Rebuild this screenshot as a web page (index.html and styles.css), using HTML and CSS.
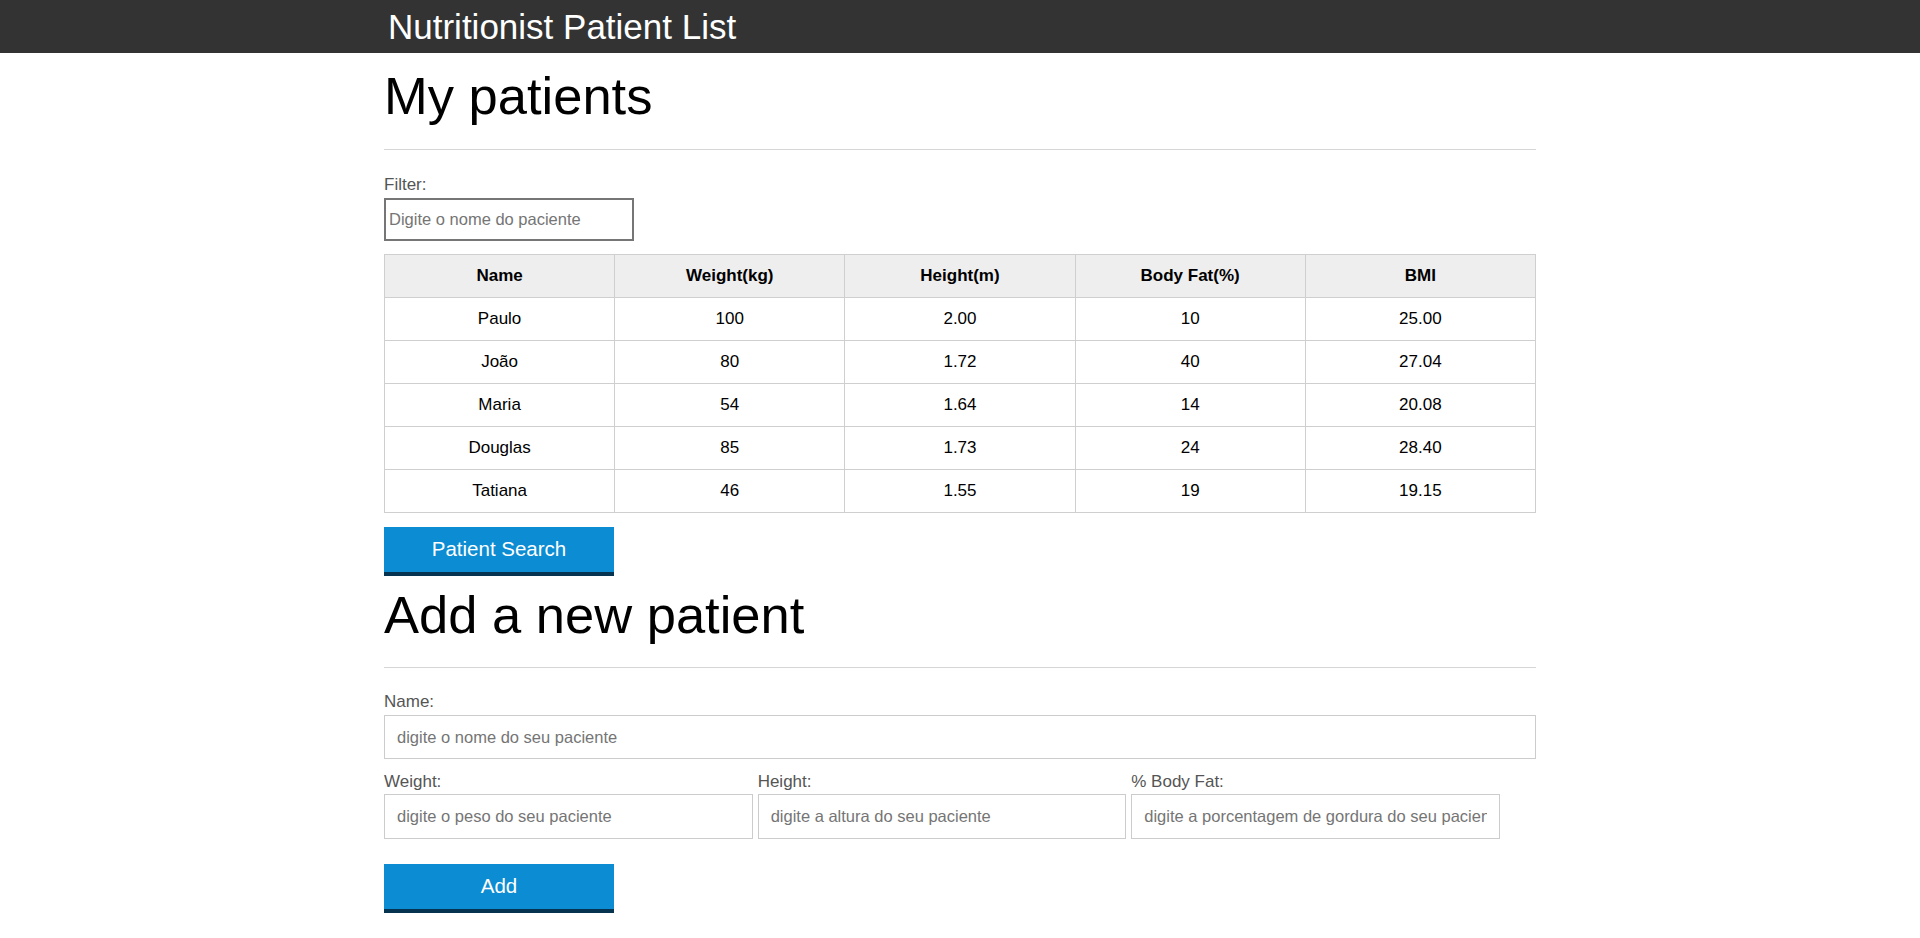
FILE: index.html
```html
<!DOCTYPE html>
<html lang="en">
<head>
<meta charset="utf-8">
<title>Nutritionist Patient List</title>
<link rel="stylesheet" href="styles.css">
</head>
<body>
<header class="topbar">
  <div class="container">
    <h1 class="brand">Nutritionist Patient List</h1>
  </div>
</header>
<main class="container">
  <section>
    <h2 class="section-title">My patients</h2>
    <hr class="rule">
    <label class="label filter-label" for="filter">Filter:</label>
    <input class="filter-input" id="filter" type="text" placeholder="Digite o nome do paciente">
    <table class="patients">
      <thead>
        <tr><th>Name</th><th>Weight(kg)</th><th>Height(m)</th><th>Body Fat(%)</th><th>BMI</th></tr>
      </thead>
      <tbody>
        <tr><td>Paulo</td><td>100</td><td>2.00</td><td>10</td><td>25.00</td></tr>
        <tr><td>João</td><td>80</td><td>1.72</td><td>40</td><td>27.04</td></tr>
        <tr><td>Maria</td><td>54</td><td>1.64</td><td>14</td><td>20.08</td></tr>
        <tr><td>Douglas</td><td>85</td><td>1.73</td><td>24</td><td>28.40</td></tr>
        <tr><td>Tatiana</td><td>46</td><td>1.55</td><td>19</td><td>19.15</td></tr>
      </tbody>
    </table>
    <button class="btn btn-search" type="button">Patient Search</button>
  </section>
  <section>
    <h2 class="section-title section-title-add">Add a new patient</h2>
    <hr class="rule rule-add">
    <form class="add-form">
      <div class="field">
        <label class="label label-name" for="name">Name:</label>
        <input class="text-input input-name" id="name" type="text" placeholder="digite o nome do seu paciente">
      </div>
      <div class="field-row">
        <div class="field field-third">
          <label class="label" for="weight">Weight:</label>
          <input class="text-input" id="weight" type="text" placeholder="digite o peso do seu paciente">
        </div>
        <div class="field field-third">
          <label class="label" for="height">Height:</label>
          <input class="text-input" id="height" type="text" placeholder="digite a altura do seu paciente">
        </div>
        <div class="field field-third">
          <label class="label" for="fat">% Body Fat:</label>
          <input class="text-input" id="fat" type="text" placeholder="digite a porcentagem de gordura do seu paciente">
        </div>
      </div>
      <button class="btn btn-add" type="button">Add</button>
    </form>
  </section>
</main>
</body>
</html>
```
FILE: styles.css
```css
* { box-sizing: border-box; }

html, body {
  margin: 0;
  padding: 0;
  background: #fff;
  font-family: "Liberation Sans", Arial, sans-serif;
  color: #000;
}

.container {
  width: 1152px;
  margin: 0 auto;
}

.topbar {
  background: #333333;
  height: 53px;
}

.brand {
  margin: 0;
  padding-left: 4px;
  font-size: 35px;
  font-weight: normal;
  line-height: 53px;
  color: #fff;
}

.section-title {
  margin: 13px 0 0;
  font-size: 52.5px;
  font-weight: normal;
  line-height: 60px;
}

.section-title-add {
  margin-top: 9px;
}

.rule {
  margin: 23px 0 0;
  height: 0;
  border: 0;
  border-top: 1px solid #d6d6d6;
}

.rule-add {
  margin-top: 22px;
}

.label {
  display: block;
  font-size: 17px;
  line-height: 20px;
  color: #555;
}

.filter-label {
  margin-top: 25px;
}

.filter-input {
  display: block;
  margin-top: 3px;
  width: 250px;
  height: 43px;
  padding: 1px 3px;
  border: 2px solid #767676;
  font-family: "Liberation Sans", Arial, sans-serif;
  font-size: 16.5px;
  color: #000;
}

.filter-input::placeholder,
.text-input::placeholder {
  color: #757575;
}

.patients {
  margin-top: 13px;
  width: 100%;
  border-collapse: collapse;
  table-layout: fixed;
  font-size: 17px;
}

.patients th,
.patients td {
  border: 1px solid #cfcfcf;
  height: 43px;
  padding: 0;
  text-align: center;
  vertical-align: middle;
}

.patients th {
  background: #eeeeee;
  font-weight: bold;
}

.btn {
  display: block;
  width: 230px;
  height: 49px;
  padding: 0 0 2px;
  border: 0;
  border-bottom: 4px solid #06334f;
  background: #0c8cd2;
  color: #fff;
  font-family: "Liberation Sans", Arial, sans-serif;
  font-size: 20.5px;
  cursor: pointer;
}

.btn-search {
  margin-top: 14px;
}

.add-form {
  margin: 0;
}

.label-name {
  margin-top: 24px;
}

.text-input {
  display: block;
  width: 100%;
  margin-top: 3px;
  padding: 0 12px;
  border: 1px solid #cccccc;
  font-family: "Liberation Sans", Arial, sans-serif;
  font-size: 16.5px;
  color: #000;
}

.input-name {
  height: 44px;
}

.field-row {
  display: flex;
  gap: 5px;
  margin-top: 13px;
}

.field-third {
  width: 32%;
}

.field-third .text-input {
  margin-top: 2px;
  height: 45px;
}

.btn-add {
  margin-top: 25px;
}
```
